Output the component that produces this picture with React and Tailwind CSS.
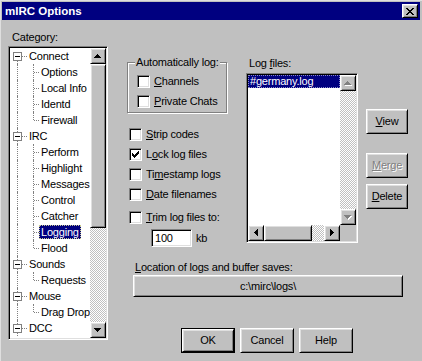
import React from 'react';

const raised =
  'bg-[#c0c0c0] border border-t-white border-l-white border-r-black border-b-black shadow-[inset_1px_1px_0_#dfdfdf,inset_-1px_-1px_0_#808080]';
const sunken =
  'border border-t-[#808080] border-l-[#808080] border-r-white border-b-white shadow-[inset_1px_1px_0_#000,inset_-1px_-1px_0_#dfdfdf]';
const dither =
  'bg-[image:repeating-conic-gradient(#ffffff_0_25%,#c0c0c0_0_50%)] bg-size-[2px_2px]';

const arrowPaths = {
  up: 'M3 0h1v1h1v1h1v1h1v1H0V3h1V2h1V1h1z',
  down: 'M0 0h7v1H6v1H5v1H4v1H3V3H2V2H1V1H0z',
  left: 'M3 0h1v7H3V6H2V5H1V4H0V3h1V2h1V1h1z',
  right: 'M0 0h1v1h1v1h1v1h1v1H3v1H2v1H1v1H0z',
};

const Arrow = ({ dir, disabled }) => {
  const vertical = dir === 'up' || dir === 'down';
  const w = vertical ? 8 : 5;
  const h = vertical ? 5 : 8;
  return (
    <svg width={w} height={h} viewBox={`0 0 ${w} ${h}`} shapeRendering="crispEdges">
      {disabled && <path d={arrowPaths[dir]} fill="#fff" transform="translate(1,1)" />}
      <path d={arrowPaths[dir]} fill={disabled ? '#808080' : '#000'} />
    </svg>
  );
};

const ScrollBtn = ({ dir, disabled }) => (
  <div className={`w-[16px] h-[16px] shrink-0 flex items-center justify-center ${raised}`}>
    <Arrow dir={dir} disabled={disabled} />
  </div>
);

// label with an access-key letter underlined
const Label = ({ text, u }) => {
  if (u === undefined) return <span>{text}</span>;
  return (
    <span>
      {text.slice(0, u)}
      <span className="underline underline-offset-[1px]">{text[u]}</span>
      {text.slice(u + 1)}
    </span>
  );
};

const Check = ({ text, u, checked, className = '' }) => (
  <div className={`h-[20px] flex items-center gap-[4px] ${className}`}>
    <span className={`w-[13px] h-[13px] shrink-0 bg-white flex items-center justify-center ${sunken}`}>
      {checked && (
        <svg width="7" height="7" viewBox="0 0 7 7" shapeRendering="crispEdges">
          <path d="M6 0h1v3H6v1H5v1H4v1H3v1H2V6H1V5H0V2h1v1h1v1h1V3h1V2h1V1h1z" fill="#000" />
        </svg>
      )}
    </span>
    <Label text={text} u={u} />
  </div>
);

const Button = ({ text, u, disabled, className = '' }) => (
  <div
    className={`flex items-center justify-center ${raised} ${
      disabled ? 'text-[#808080] [text-shadow:1px_1px_0_#fff]' : ''
    } ${className}`}
  >
    <Label text={text} u={u} />
  </div>
);

const tree = [
  { label: 'Connect', children: ['Options', 'Local Info', 'Identd', 'Firewall'] },
  { label: 'IRC', children: ['Perform', 'Highlight', 'Messages', 'Control', 'Catcher', 'Logging', 'Flood'] },
  { label: 'Sounds', children: ['Requests'] },
  { label: 'Mouse', children: ['Drag Drop'] },
  { label: 'DCC', children: [] },
];

const rows = [];
tree.forEach((node, i) => {
  rows.push({ label: node.label, top: true, first: i === 0 });
  node.children.forEach((c, j) => {
    rows.push({ label: c, top: false, lastChild: j === node.children.length - 1 });
  });
});

const dotV = 'absolute w-0 border-l border-dotted border-[#808080]';
const dotH = 'absolute h-0 top-[8px] border-t border-dotted border-[#808080]';

const TreeRow = ({ row }) => {
  const selected = row.label === 'Logging';
  return (
    <div className={`relative h-[16px] shrink-0 flex items-center ${row.top ? 'pl-[17px]' : 'pl-[29px]'}`}>
      {/* root line */}
      <span className={`${dotV} left-[7px] ${row.first ? 'top-[8px] bottom-0' : 'inset-y-0'}`} />
      {row.top ? (
        <>
          <span className={`${dotH} left-[12px] w-[5px]`} />
          <span className="absolute left-[3px] top-[4px] w-[9px] h-[9px] border border-[#808080] bg-white flex items-center justify-center">
            <span className="w-[5px] h-px bg-black" />
          </span>
        </>
      ) : (
        <>
          <span className={`${dotV} left-[23px] ${row.lastChild ? 'top-0 h-[8px]' : 'inset-y-0'}`} />
          <span className={`${dotH} left-[24px] w-[5px]`} />
        </>
      )}
      <span
        className={`relative whitespace-nowrap h-[14px] leading-[12px] px-[1px] border ${
          selected ? 'bg-[#000080] text-white border-dotted border-[#c8c890]' : 'border-transparent'
        }`}
      >
        {row.label}
      </span>
    </div>
  );
};

export default function App() {
  return (
    <div className="w-[422px] h-[361px] overflow-hidden bg-[#c0c0c0] pt-[2px] px-[2px] shadow-[inset_1px_1px_0_#dfdfdf] font-['Liberation_Sans',Arial,sans-serif] text-[11px] leading-[13px] text-black tracking-[-0.2px] select-none">
      {/* Title bar */}
      <div className="h-[18px] bg-[#000080] flex items-center justify-between pl-[3px] pr-[2px]">
        <span className="text-white font-bold text-[11.5px] tracking-normal">mIRC Options</span>
        <div className={`w-[16px] h-[14px] flex items-center justify-center ${raised}`}>
          <svg width="8" height="7" viewBox="0 0 8 7" shapeRendering="crispEdges">
            <path
              d="M0 0h2v1H0zM6 0h2v1H6zM1 1h2v1H1zM5 1h2v1H5zM2 2h4v1H2zM3 3h2v1H3zM2 4h4v1H2zM1 5h2v1H1zM5 5h2v1H5zM0 6h2v1H0zM6 6h2v1H6z"
              fill="#000"
            />
          </svg>
        </div>
      </div>

      <div className="flex">
        {/* Category tree */}
        <div className="ml-[6px] w-[100px] shrink-0">
          <div className="mt-[11px] ml-[4px]">Category:</div>
          <div className={`mt-[2px] h-[294px] bg-white p-[1px] flex ${sunken}`}>
            <div className="flex-1 overflow-hidden flex flex-col">
              {rows.map((r) => (
                <TreeRow key={r.label} row={r} />
              ))}
            </div>
            <div className="w-[16px] flex flex-col">
              <ScrollBtn dir="up" />
              <div className={`h-[164px] shrink-0 ${raised}`} />
              <div className={`flex-1 ${dither}`} />
              <ScrollBtn dir="down" />
            </div>
          </div>
        </div>

        {/* Right side */}
        <div className="ml-[19px] flex-1">
          <div className="flex items-start">
            {/* checkboxes */}
            <div className="w-[100px] shrink-0 mt-[36px]">
              <fieldset className="w-[100px] border border-[#808080] shadow-[inset_1px_1px_0_#fff,1px_1px_0_#fff] pl-[9px] pt-[2px] pb-[1px]">
                <legend className="-ml-[2px] px-[1px] bg-[#c0c0c0]">Automatically log:</legend>
                <Check text="Channels" u={0} />
                <Check text="Private Chats" u={0} />
              </fieldset>
              <div className="mt-[11px] pl-[2px]">
                <Check text="Strip codes" u={0} />
                <Check text="Lock log files" u={1} checked />
                <Check text="Timestamp logs" u={2} />
                <Check text="Date filenames" u={0} />
                <Check text="Trim log files to:" u={0} className="mt-[3px] whitespace-nowrap" />
              </div>
              <div className="mt-[2px] ml-[24px] flex items-center">
                <div className={`w-[41px] h-[18px] bg-white pl-[3px] flex items-center ${sunken}`}>100</div>
                <span className="ml-[4px]">kb</span>
              </div>
            </div>

            {/* Log files list */}
            <div className="ml-[19px] w-[112px] shrink-0 mt-[37px]">
              <div className="ml-[3px]">
                <Label text="Log files:" u={4} />
              </div>
              <div className={`mt-[3px] h-[170px] bg-white p-[1px] flex flex-col ${sunken}`}>
                <div className="h-[150px] flex">
                  <div className="flex-1">
                    <div className="h-[13px] bg-[#000080] text-white leading-[11px] pl-[1px] border border-dotted border-[#8888c8]">
                      #germany.log
                    </div>
                  </div>
                  <div className="w-[16px] flex flex-col">
                    <ScrollBtn dir="up" disabled />
                    <div className={`flex-1 ${dither}`} />
                    <ScrollBtn dir="down" disabled />
                  </div>
                </div>
                <div className="h-[16px] flex">
                  <ScrollBtn dir="left" />
                  <div className={`w-[48px] h-[16px] shrink-0 ${raised}`} />
                  <div className={`flex-1 ${dither}`} />
                  <ScrollBtn dir="right" />
                  <div className="w-[16px] bg-[#c0c0c0]" />
                </div>
              </div>
            </div>

            {/* side buttons */}
            <div className="ml-[8px] w-[42px] shrink-0 flex flex-col">
              <Button text="View" u={0} className="mt-[89px] h-[25px]" />
              <Button text="Merge" u={0} disabled className="mt-[19px] h-[25px]" />
              <Button text="Delete" u={0} className="mt-[6px] h-[25px]" />
            </div>
          </div>

          {/* location */}
          <div className="mt-[14px] ml-[8px]">
            <Label text="Location of logs and buffer saves:" u={0} />
          </div>
          <Button text="c:\mirc\logs\" className="mt-[1px] ml-[6px] w-[270px] h-[22px]" />

          {/* dialog buttons */}
          <div className="mt-[31px] ml-[54px] flex gap-[5px]">
            <div className="w-[54px] h-[25px] border border-black flex">
              <Button text="OK" className="flex-1" />
            </div>
            <Button text="Cancel" className="w-[54px] h-[25px]" />
            <Button text="Help" className="w-[54px] h-[25px]" />
          </div>
        </div>
      </div>
    </div>
  );
}
